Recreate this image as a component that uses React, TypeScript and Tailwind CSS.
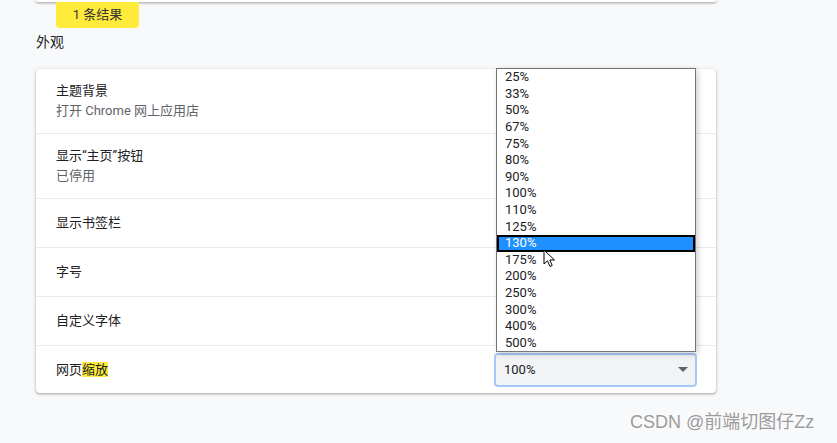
import React from "react"

const zoomLevels = ["25%", "33%", "50%", "67%", "75%", "80%", "90%", "100%", "110%", "125%", "130%", "175%", "200%", "250%", "300%", "400%", "500%"]

const font = { fontFamily: 'Roboto, "Noto Sans CJK SC", sans-serif' }

function Row({ children, className }: { children: React.ReactNode; className: string }) {
    return (
        <div className={`flex items-center pl-5 pr-[19px] ${className}`}>
            {children}
        </div>
    )
}

function Cursor() {
    return (
        <svg className="absolute left-[507px] top-[180px]" width="13" height="19" viewBox="0 0 13 19">
            <path d="M1 1 L1 15 L4.5 11.8 L7 17.5 L9.2 16.5 L6.8 11 L11.5 11 Z" fill="#fff" stroke="#000" strokeWidth="1" strokeLinejoin="round" />
        </svg>
    )
}

export default function App() {
    return (
        <div className="min-h-[443px] w-[837px] bg-[#f8f9fa] relative overflow-hidden text-[#202124]" style={font}>
            <div className="pl-[36px] w-[716px]">
                <div className="h-[2px] bg-white rounded-b-[4px] shadow-[0_1px_2px_rgba(60,64,67,0.3),0_1px_3px_1px_rgba(60,64,67,0.15)]" />
                <div className="ml-[20px] w-[83px] h-[26px] bg-[#ffeb3b] rounded-b-[4px] flex items-center justify-center text-[13px] text-[#333]">
                    1 条结果
                </div>
                <div className="mt-[4px] h-5 leading-5 text-[14px]">外观</div>
                <div className="relative mt-[17px] bg-white rounded-[4px] shadow-[0_1px_2px_rgba(60,64,67,0.3),0_1px_3px_1px_rgba(60,64,67,0.15)] text-[13px]">
                    <Row className="h-16">
                        <div className="leading-5">
                            <div>主题背景</div>
                            <div className="text-[#5f6368]">打开 Chrome 网上应用店</div>
                        </div>
                    </Row>
                    <Row className="h-[65px] border-t border-[#e8eaed]">
                        <div className="leading-5">
                            <div>显示“主页”按钮</div>
                            <div className="text-[#5f6368]">已停用</div>
                        </div>
                    </Row>
                    <Row className="h-[49px] border-t border-[#e8eaed]">显示书签栏</Row>
                    <Row className="h-[49px] border-t border-[#e8eaed]">字号</Row>
                    <Row className="h-[49px] border-t border-[#e8eaed]">自定义字体</Row>
                    <Row className="h-[48px] border-t border-[#e8eaed]">
                        <div className="flex-1">
                            网页<span className="bg-[#ffeb3b]">缩放</span>
                        </div>
                        <div className="w-[203px] h-[34px] border-2 border-[#a8c7fa] bg-[#f1f3f4] rounded-[4px] flex items-center pl-[8px] pr-[7px]">
                            <span className="flex-1">100%</span>
                            <span className="w-0 h-0 border-l-[5px] border-r-[5px] border-t-[5px] border-l-transparent border-r-transparent border-t-[#5f6368]" />
                        </div>
                    </Row>

                    <div className="absolute left-[460px] top-[-1px] w-[200px] h-[284px] bg-white border border-[#767676] shadow-[2px_2px_6px_rgba(0,0,0,0.2)] flex flex-col overflow-hidden text-[13px] leading-[16px] text-[#202124]">
                        {zoomLevels.map((z) => (
                            <div
                                key={z}
                                className={`h-[16.6px] shrink-0 flex items-center ${z === "130%" ? "bg-[#1e90ff] text-white border-2 border-black pl-[6px]" : "pl-[8px]"}`}
                            >
                                {z}
                            </div>
                        ))}
                    </div>
                    <Cursor />
                </div>
            </div>
            <div
                className="absolute left-[630px] top-[410px] text-[18px] text-[#9a9a9a] leading-6"
                style={{ fontFamily: '"Liberation Sans", "Noto Sans CJK SC", sans-serif', textShadow: "0 0 2px #fff, 0 0 1px #fff" }}
            >
                CSDN @前端切图仔Zz
            </div>
        </div>
    )
}
